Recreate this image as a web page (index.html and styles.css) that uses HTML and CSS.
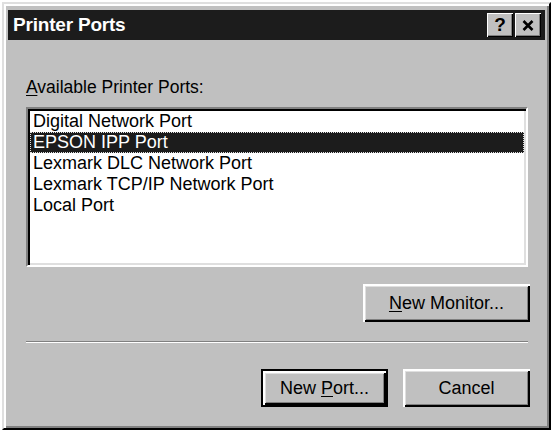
FILE: index.html
```html
<!doctype html>
<html lang="en">
  <head>
    <meta charset="UTF-8" />
    <title>Printer Ports</title>
    <link rel="stylesheet" href="styles.css">
  </head>
  <body>
    <!-- Dialog -->
    <div class="window">
      <div class="title-bar">
        <span class="title">Printer Ports</span>
        <div class="title-buttons">
          <span class="title-btn help">?</span>
          <span class="title-btn">
            <svg width="12" height="11" viewBox="0 0 12 11">
              <path d="M1.5 1 L10.5 10 M10.5 1 L1.5 10" stroke="#000" stroke-width="2.6" fill="none" />
            </svg>
          </span>
        </div>
      </div>

      <div class="dialog-body">
        <div class="field-label"><u>A</u>vailable Printer Ports:</div>
        <ul class="port-list">
          <li>Digital Network Port</li>
          <li class="selected">EPSON IPP Port</li>
          <li>Lexmark DLC Network Port</li>
          <li>Lexmark TCP/IP Network Port</li>
          <li>Local Port</li>
        </ul>

        <div class="button-row monitor-row">
          <button class="btn wide"><u>N</u>ew Monitor...</button>
        </div>

        <hr class="separator" />

        <div class="button-row footer">
          <button class="btn default">New <u>P</u>ort...</button>
          <button class="btn">Cancel</button>
        </div>
      </div>
    </div>
  </body>
</html>
```

FILE: styles.css
```css
/* General */
body {
  margin: 0;
  background-color: #fff;
  font-family: "Liberation Sans", Arial, sans-serif;
}

u {
  text-decoration-thickness: 1px;
  text-underline-offset: 2px;
}

/* Window frame */
.window {
  width: 549px;
  height: 428px;
  margin: 2px 0 0 2px;
  box-sizing: border-box;
  display: flex;
  flex-direction: column;
  background-color: #c0c0c0;
  border: 2px solid;
  border-color: #dfdfdf #000 #000 #dfdfdf;
  box-shadow: inset 2px 2px #fff, inset -2px -2px #808080;
  padding: 6px 4px 4px 4px;
}

/* Title bar */
.title-bar {
  height: 30px;
  display: flex;
  justify-content: space-between;
  align-items: center;
  background-color: #1c1c1c;
  padding: 0 4px 0 5px;
}

.title {
  color: #fff;
  font-weight: bold;
  font-size: 19px;
  line-height: 30px;
  letter-spacing: -0.2px;
}

.title-buttons {
  display: flex;
  gap: 2px;
}

.title-btn {
  width: 26px;
  height: 24px;
  box-sizing: border-box;
  display: flex;
  justify-content: center;
  align-items: center;
  background-color: #c0c0c0;
  box-shadow: inset 1px 1px #fff, inset -1px -1px #000, inset -2px -2px #808080;
  font-weight: bold;
  font-size: 19px;
  color: #000;
}

/* Body */
.dialog-body {
  flex: 1;
  display: flex;
  flex-direction: column;
  padding: 37px 15px 0 18px;
  font-size: 18px;
  color: #000;
}

.field-label {
  font-size: 17.5px;
  line-height: 21px;
}

.port-list {
  list-style: none;
  width: 502px;
  height: 160px;
  box-sizing: border-box;
  margin: 9px 0 0 0;
  padding: 2px;
  background-color: #fff;
  border: 2px solid;
  border-color: #808080 #fff #fff #808080;
  box-shadow: inset 2px 2px #000, inset -2px -2px #dfdfdf;
}

.port-list li {
  height: 21px;
  line-height: 21px;
  padding: 0 3px;
  white-space: nowrap;
}

.port-list li.selected {
  background-color: #1c1c1c;
  color: #fff;
  outline: 1px dotted #e0e0e0;
  outline-offset: -1px;
}

/* Buttons */
.button-row {
  display: flex;
  justify-content: flex-end;
  gap: 15px;
}

.monitor-row {
  margin-top: 17px;
}

.footer {
  margin-top: 26px;
}

.btn {
  width: 127px;
  height: 38px;
  padding: 0;
  box-sizing: border-box;
  background-color: #c0c0c0;
  border: none;
  font-family: "Liberation Sans", Arial, sans-serif;
  font-size: 18px;
  color: #000;
  box-shadow: inset 2px 2px #fff, inset -2px -2px #000, inset 3px 3px #dfdfdf, inset -3px -3px #808080;
}

.btn.wide {
  width: 167px;
}

.btn.default {
  border: 2px solid #000;
}

.separator {
  width: 502px;
  height: 0;
  margin: 19px 0 0 0;
  border: none;
  border-top: 1px solid #808080;
  border-bottom: 1px solid #fff;
}
```
